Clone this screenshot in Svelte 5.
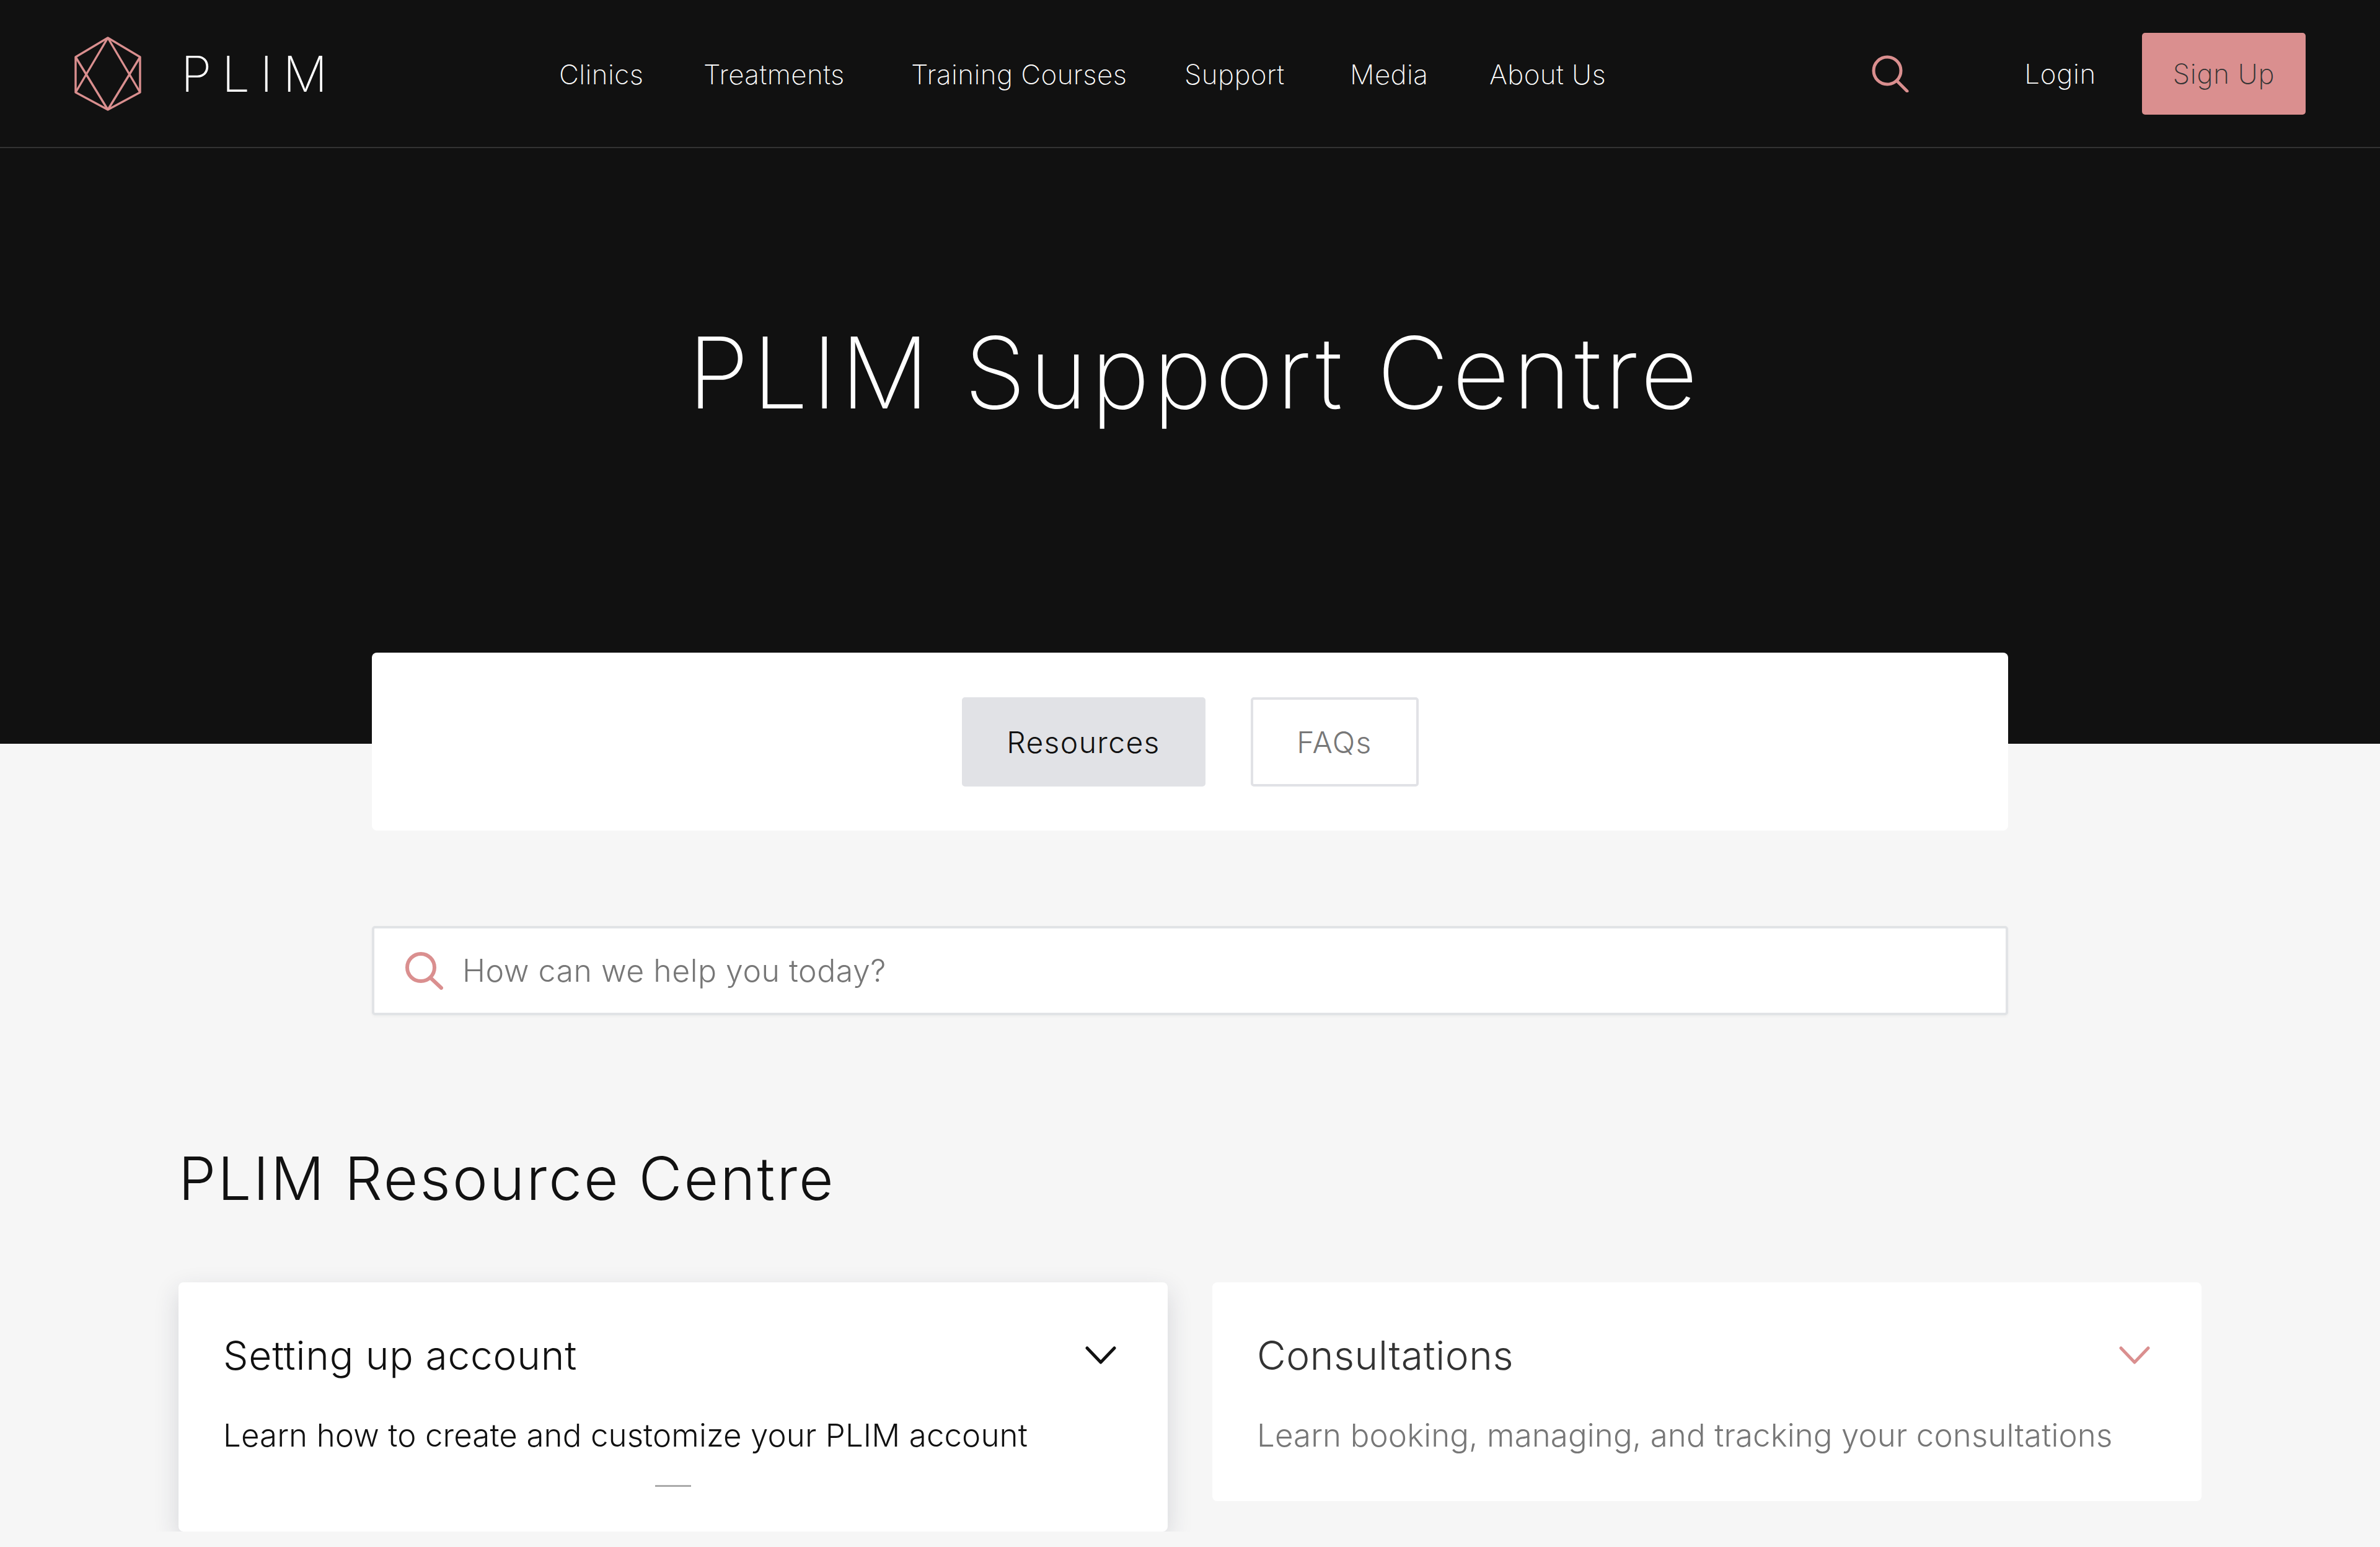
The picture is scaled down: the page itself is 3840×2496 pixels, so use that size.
<script lang="ts">
    const navLinks = ["Clinics", "Treatments", "Training Courses", "Support", "Media", "About Us"];

    const cards = [
        { title: "Setting up account", text: "Learn how to create and customize your PLIM account", active: true },
        { title: "Consultations", text: "Learn booking, managing, and tracking your consultations", active: false }
    ];
</script>

<div class="page">
    <div class="hero">
        <header class="topbar">
            <div class="brand">
                <svg class="logo" viewBox="0 0 108 120" fill="none" stroke="#da8f8f" stroke-width="3.4">
                    <path d="M54 2 106 33V90L54 118 2 90V33Z" stroke-linejoin="round" />
                    <path d="M54 2 2 90M54 2 106 90M54 118 2 33M54 118 106 33" />
                </svg>
                <span class="brand-name">PLIM</span>
            </div>
            <nav class="nav">
                {#each navLinks as link}
                    <span>{link}</span>
                {/each}
            </nav>
            <svg class="top-search" viewBox="0 0 60 60" fill="none" stroke="#da8f8f" stroke-width="5" stroke-linecap="round">
                <circle cx="25" cy="25" r="22" />
                <path d="M41 42 57 58" />
            </svg>
            <span class="login">Login</span>
            <button class="signup">Sign Up</button>
        </header>
        <h1>PLIM Support Centre</h1>
    </div>

    <div class="tabs">
        <button class="tab active">Resources</button>
        <button class="tab">FAQs</button>
    </div>

    <div class="search">
        <svg viewBox="0 0 62 62" fill="none" stroke="#da8f8f" stroke-width="6" stroke-linecap="round">
            <circle cx="26" cy="26" r="22" />
            <path d="M42 43 59 59" />
        </svg>
        <span>How can we help you today?</span>
    </div>

    <main class="resources">
        <h2>PLIM Resource Centre</h2>
        <div class="grid">
            {#each cards as card}
                <article class="card" class:active={card.active}>
                    <div class="card-head">
                        <h3>{card.title}</h3>
                        <svg viewBox="0 0 50 29" fill="none" stroke-width="5" stroke-linecap="round" stroke-linejoin="round">
                            <path d="M3 3 25 26 47 3" />
                        </svg>
                    </div>
                    <p>{card.text}</p>
                    {#if card.active}
                        <div class="dash"></div>
                    {/if}
                </article>
            {/each}
        </div>
    </main>
</div>

<style>
    :global(body) {
        margin: 0;
        background: #f6f6f6;
    }

    .page {
        font-family: Inter, "Open Sans", sans-serif;
        font-weight: 300;
        color: #111;
    }

    .hero {
        background: #111;
        height: 1200px;
        color: #fff;
    }

    .topbar {
        display: flex;
        align-items: center;
        height: 237px;
        border-bottom: 2px solid #333;
        padding: 0 120px;
    }

    .brand {
        display: flex;
        align-items: center;
        gap: 64px;
        width: 782px;
    }

    .logo {
        width: 108px;
        height: 120px;
    }

    .brand-name {
        font-size: 80px;
        font-weight: 200;
        letter-spacing: 16.5px;
    }

    .nav {
        display: grid;
        grid-template-columns: 233px 335px 441px 267px 225px auto;
        padding-top: 3px;
        font-size: 44px;
        font-weight: 220;
        letter-spacing: 0.4px;
        color: #fff;
    }

    .top-search {
        width: 60px;
        height: 60px;
        margin-left: auto;
    }

    .login {
        font-size: 44px;
        font-weight: 220;
        letter-spacing: 0.7px;
        margin-left: 186px;
    }

    .signup {
        width: 264px;
        height: 132px;
        margin-left: 74px;
        background: #da8f8f;
        border: 0;
        border-radius: 5px;
        font: inherit;
        font-size: 44px;
        font-weight: 220;
        letter-spacing: 0.7px;
        color: #333;
    }

    h1 {
        margin: 0;
        padding: 262px 0 0 14px;
        font-size: 160px;
        line-height: 200px;
        font-weight: 200;
        letter-spacing: 5.55px;
        text-align: center;
    }

    .tabs {
        display: flex;
        justify-content: center;
        gap: 73px;
        box-sizing: border-box;
        width: 2640px;
        height: 287px;
        margin: -147px auto 0;
        padding-top: 72px;
        background: #fff;
        border-radius: 8px;
    }

    .tab {
        box-sizing: border-box;
        width: 271px;
        height: 144px;
        background: #fff;
        border: 4px solid #e1e2e6;
        border-radius: 5px;
        font: inherit;
        font-size: 48px;
        letter-spacing: 1.4px;
        color: #777;
    }

    .tab.active {
        width: 393px;
        background: #e1e2e6;
        color: #111;
    }

    .search {
        display: flex;
        align-items: center;
        gap: 31px;
        box-sizing: border-box;
        width: 2640px;
        height: 144px;
        margin: 154px auto 0;
        padding-left: 49px;
        background: #fff;
        border: 4px solid #e1e3e6;
        border-radius: 5px;
        box-shadow: 0 2px 4px rgba(0, 0, 0, 0.04);
        font-size: 50px;
        font-weight: 260;
        letter-spacing: 0.5px;
        color: #777;
    }

    .search svg {
        width: 62px;
        height: 62px;
    }

    .resources {
        padding: 0 288px;
    }

    h2 {
        margin: 0;
        padding-top: 203px;
        font-size: 96px;
        line-height: 120px;
        font-weight: 260;
        letter-spacing: 3px;
    }

    .grid {
        display: grid;
        grid-template-columns: 1fr 1fr;
        gap: 72px;
        align-items: start;
        margin-top: 108px;
    }

    .card {
        padding: 72px 72px 70px;
        background: #fff;
        border-radius: 8px;
        color: #777;
    }

    .card.active {
        padding-bottom: 72px;
        color: #111;
        box-shadow: 0 14px 40px rgba(40, 45, 70, 0.16);
    }

    .card-head {
        display: flex;
        justify-content: space-between;
        align-items: center;
        padding-right: 11px;
    }

    h3 {
        margin: 0;
        font-size: 64px;
        line-height: 92px;
        font-weight: 300;
        letter-spacing: 0.6px;
        color: #333;
    }

    .card.active h3 {
        color: #111;
        font-weight: 340;
        letter-spacing: 0.8px;
    }

    .card svg {
        width: 50px;
        height: 29px;
        margin-top: -2px;
        stroke: #da8f8f;
    }

    .card.active svg {
        stroke: #111;
    }

    p {
        margin: 47px 0 0;
        font-size: 51px;
        font-weight: 270;
        line-height: 72px;
        letter-spacing: 0.1px;
    }

    .dash {
        width: 58px;
        height: 3px;
        margin: 44px auto 0;
        background: #aaa;
    }
</style>
